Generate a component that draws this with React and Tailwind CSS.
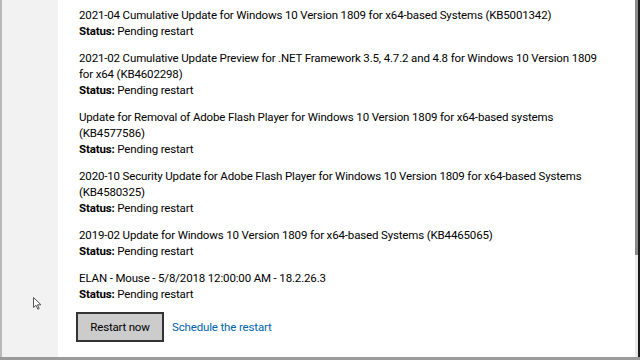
import React from 'react';

const updates = [
  { lines: ['2021-04 Cumulative Update for Windows 10 Version 1809 for x64-based Systems (KB5001342)'] },
  { lines: ['2021-02 Cumulative Update Preview for .NET Framework 3.5, 4.7.2 and 4.8 for Windows 10 Version 1809', 'for x64 (KB4602298)'] },
  { lines: ['Update for Removal of Adobe Flash Player for Windows 10 Version 1809 for x64-based systems', '(KB4577586)'] },
  { lines: ['2020-10 Security Update for Adobe Flash Player for Windows 10 Version 1809 for x64-based Systems', '(KB4580325)'] },
  { lines: ['2019-02 Update for Windows 10 Version 1809 for x64-based Systems (KB4465065)'] },
  { lines: ['ELAN - Mouse - 5/8/2018 12:00:00 AM - 18.2.26.3'] },
];

function Pointer() {
  return (
    <svg width="9" height="13" viewBox="0 0 9 13" className="ml-[31px] mt-[297px]">
      <path d="M0.5 0.5 L0.5 10.5 L3 8.2 L4.8 12.2 L6.2 11.6 L4.5 7.8 L8 7.8 Z" fill="white" stroke="#555" strokeWidth="1" />
    </svg>
  );
}

export default function App() {
  return (
    <div className="w-[640px] h-[360px] overflow-hidden flex flex-col bg-white text-black" style={{ fontFamily: 'Roboto, "Open Sans", sans-serif' }}>
      <div className="flex flex-1 min-h-0">
        {/* left nav strip */}
        <div className="w-[58px] shrink-0 bg-[#f2f2f2] border-l-2 border-[#b9b9b9]">
          <Pointer />
        </div>

        {/* update list */}
        <div className="flex-1 pl-[21px] pt-[7px] text-[11.5px] leading-[16px] tracking-[-0.15px]">
          {updates.map((u, i) => (
            <div key={i} className="mb-[11px] whitespace-nowrap">
              {u.lines.map((l, j) => (
                <div key={j}>{l}</div>
              ))}
              <div>
                <span className="font-bold">Status:</span> Pending restart
              </div>
            </div>
          ))}

          <div className="flex items-center gap-[8px] -mt-[1px] -ml-[3px]">
            <button className="w-[88px] h-[30px] bg-[#cccccc] border-2 border-[#333333] text-[11.5px] tracking-[-0.2px]">
              Restart now
            </button>
            <span className="text-[#0063b1] text-[11.5px]">Schedule the restart</span>
          </div>
        </div>

        {/* scrollbar */}
        <div className="w-[5px] shrink-0 flex flex-col">
          <div className="flex flex-1">
            <div className="w-[3px] flex flex-col">
              <div className="h-[255px] bg-[#8a8a8a]" />
              <div className="flex-1 bg-[#e8e8e8]" />
            </div>
            <div className="w-[2px] bg-[#1a1a1a]" />
          </div>
        </div>
      </div>
      <div className="h-[3px] bg-[#9a9a9a]" />
    </div>
  );
}
